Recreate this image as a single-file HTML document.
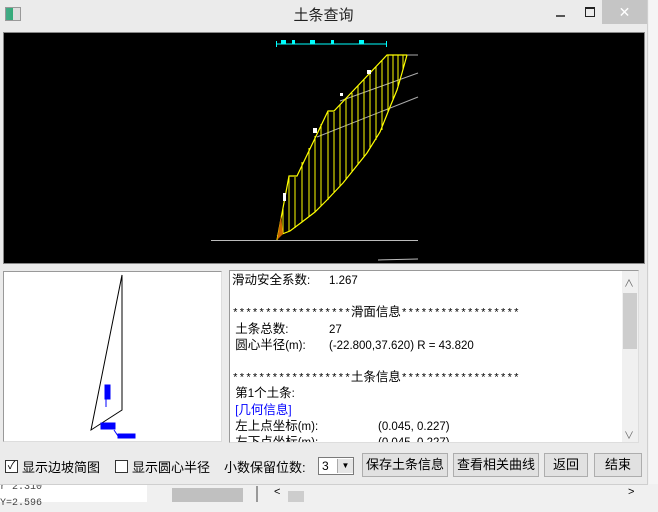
<!DOCTYPE html>
<html><head><meta charset="utf-8"><style>
body{margin:0;width:658px;height:502px;overflow:hidden;background:#f0f0f0;font-family:"Liberation Sans","Noto Sans CJK SC",sans-serif;position:relative}
.a{position:absolute}
.btn{position:absolute;top:453px;border:1px solid #adadad;background:#e1e1e1;font-size:13px;line-height:22px;text-align:center;box-sizing:border-box;height:24px}
.txt{font-family:"Liberation Sans","Noto Sans CJK SC",sans-serif;font-size:11.5px;color:#000}
.txt div{height:16.2px;line-height:16px;white-space:pre;overflow:visible}
.txt b{font-weight:normal;font-size:12.5px;line-height:1;font-family:"Noto Sans CJK SC",sans-serif}
.txt i{font-style:normal;font-size:11px;line-height:1;font-family:"Liberation Mono",monospace}
</style></head><body>
<div class="a" style="left:0;top:484px;width:147px;height:18px;background:#fff"></div>
<div class="a" style="left:0;top:480px;font-size:10px;color:#444;font-family:'Liberation Mono',monospace;line-height:16px;white-space:pre">r 2.310
Y=2.596</div>
<div class="a" style="left:172px;top:488px;width:71px;height:14px;background:#c0c0c0"></div>
<div class="a" style="left:256px;top:486px;width:2px;height:16px;background:#999"></div>
<div class="a" style="left:259px;top:486px;width:399px;height:16px;background:#f0f0f0"></div>
<div class="a" style="left:288px;top:491px;width:16px;height:11px;background:#cdcdcd"></div>
<div class="a" style="left:274px;top:486px;font-size:11px">&lt;</div>
<div class="a" style="left:628px;top:486px;font-size:11px">&gt;</div>
<div class="a" style="left:0;top:0;width:647px;height:484px;background:#ebebeb;border-right:1px solid #cfcfcf;border-bottom:1px solid #cfcfcf"></div>
<div class="a" style="left:649px;top:0;width:9px;height:484px;background:#f5f5f5"></div>
<div class="a" style="left:5px;top:7px;width:14px;height:12px;background:linear-gradient(90deg,#4a8 0,#3a7 50%,#ddd 50%);border:1px solid #999"></div>
<div class="a" style="left:0;top:4px;width:647px;text-align:center;font-size:15px;color:#222">土条查询</div>
<div class="a" style="left:556px;top:15px;width:9px;height:2px;background:#555"></div>
<div class="a" style="left:585px;top:7px;width:8px;height:7px;border:1px solid #222;border-top-width:2px"></div>
<div class="a" style="left:602px;top:0;width:45px;height:24px;background:#c5c5c5;color:#fff;text-align:center;font-size:14px;line-height:24px">✕</div>
<div class="a" style="left:3px;top:32px;width:642px;height:232px;background:#000;border:1px solid #888;box-sizing:border-box"></div>
<svg class="a" style="left:0;top:0" width="658" height="270">
<line x1="211" y1="240.5" x2="418" y2="240.5" stroke="#bbb"/>
<line x1="378" y1="260" x2="418" y2="259" stroke="#bbb"/>
<line x1="340" y1="101" x2="418" y2="73" stroke="#aaa"/>
<line x1="317" y1="137" x2="418" y2="97" stroke="#aaa"/>
<line x1="387" y1="55" x2="418" y2="55" stroke="#aaa"/>
<g stroke="#ff0" fill="none" stroke-width="1.2">
<polyline points="277,240 289,176 297,176 328,111 334,111 387,55 407,55"/>
<polyline points="277,236 290,231 302,222 315,212 327,200 343,183 355,168 367,153 380,132 390,107 397,90 402,73 407,55"/>
<g stroke-width="1">
<line x1="283" y1="208" x2="283" y2="234"/><line x1="289" y1="177" x2="289" y2="231"/><line x1="295" y1="177" x2="295" y2="228"/>
<line x1="302" y1="162" x2="302" y2="222"/><line x1="309" y1="148" x2="309" y2="217"/><line x1="315" y1="136" x2="315" y2="212"/>
<line x1="321" y1="124" x2="321" y2="206"/><line x1="328" y1="112" x2="328" y2="200"/><line x1="334" y1="112" x2="334" y2="193"/>
<line x1="340" y1="105" x2="340" y2="186"/><line x1="346" y1="99" x2="346" y2="180"/><line x1="352" y1="93" x2="352" y2="172"/>
<line x1="358" y1="86" x2="358" y2="164"/><line x1="364" y1="80" x2="364" y2="157"/><line x1="370" y1="73" x2="370" y2="148"/>
<line x1="376" y1="67" x2="376" y2="140"/><line x1="382" y1="60" x2="382" y2="130"/><line x1="388" y1="55" x2="388" y2="112"/>
<line x1="393" y1="55" x2="393" y2="100"/><line x1="398" y1="55" x2="398" y2="86"/><line x1="403" y1="55" x2="403" y2="70"/>
</g></g>
<polygon points="277,240 281,215 283,234" fill="#c60"/>
<line x1="276" y1="44" x2="386" y2="44" stroke="#0ff"/>
<g fill="#0ff"><rect x="281" y="40" width="5" height="4"/><rect x="292" y="40" width="3" height="4"/><rect x="310" y="40" width="5" height="4"/><rect x="331" y="40" width="3" height="4"/><rect x="359" y="40" width="5" height="4"/></g>
<g stroke="#0ff"><line x1="276.5" y1="41" x2="276.5" y2="47"/><line x1="386.5" y1="41" x2="386.5" y2="47"/></g>
<g fill="#fff"><rect x="283" y="193" width="3" height="8"/><rect x="313" y="128" width="4" height="5"/><rect x="367" y="70" width="4" height="4"/><rect x="340" y="93" width="3" height="3"/></g>
</svg>
<div class="a" style="left:3px;top:271px;width:219px;height:171px;background:#fff;border:1px solid #999;border-right-color:#ddd;border-bottom-color:#ddd;box-sizing:border-box"></div>
<svg class="a" style="left:0;top:260px" width="230" height="190">
<polygon points="122,15 122,150 91,170" fill="none" stroke="#000" stroke-width="1"/>
<g stroke="#00f" fill="#00f"><line x1="106" y1="125" x2="106" y2="147"/><rect x="105" y="125" width="5" height="14"/><rect x="101" y="163" width="14" height="6"/><line x1="114" y1="170" x2="118" y2="176"/><rect x="118" y="174" width="17" height="4"/></g>
</svg>
<div class="a" style="left:229px;top:270px;width:410px;height:173px;background:#fff;border:1px solid #999;border-right-color:#ddd;border-bottom-color:#ddd;box-sizing:border-box;overflow:hidden">
<div class="a txt" style="left:2px;top:2px">
<div><b>滑动安全系数</b>:<span style="position:absolute;left:97px">1.267</span></div>
<div></div>
<div><i>******************</i><b>滑面信息</b><i>******************</i></div>
<div> <b>土条总数</b>:<span style="position:absolute;left:97px">27</span></div>
<div> <b>圆心半径</b>(m):<span style="position:absolute;left:97px">(-22.800,37.620) R = 43.820</span></div>
<div></div>
<div><i>******************</i><b>土条信息</b><i>******************</i></div>
<div> <b>第</b>1<b>个土条</b>:</div>
<div style="color:#00f"> [<b>几何信息</b>]</div>
<div> <b>左上点坐标</b>(m):<span style="position:absolute;left:146px">(0.045, 0.227)</span></div>
<div> <b>左下点坐标</b>(m):<span style="position:absolute;left:146px">(0.045, 0.227)</span></div>
</div>
<div class="a" style="right:0;top:0;width:16px;height:171px;background:#f0f0f0"></div>
<div class="a" style="right:1px;top:22px;width:14px;height:56px;background:#cdcdcd"></div>
<div class="a" style="right:4px;top:4px;font-size:10px;color:#666">∧</div>
<div class="a" style="right:4px;top:156px;font-size:10px;color:#666">∨</div>
</div>
<div class="a" style="left:5px;top:460px;width:11px;height:11px;border:1px solid #333;background:#fff;font-size:11px;line-height:11px;text-align:center">✓</div>
<div class="a" style="left:22px;top:457px;font-size:13px">显示边坡简图</div>
<div class="a" style="left:115px;top:460px;width:11px;height:11px;border:1px solid #333;background:#fff"></div>
<div class="a" style="left:132px;top:457px;font-size:13px">显示圆心半径</div>
<div class="a" style="left:224px;top:457px;font-size:13px">小数保留位数:</div>
<div class="a" style="left:318px;top:457px;width:36px;height:18px;border:1px solid #7a7a7a;background:#fff;box-sizing:border-box;font-size:12px;line-height:16px;padding-left:3px">3</div>
<div class="a" style="left:337px;top:459px;width:15px;height:14px;background:#e6e6e6;border-left:1px solid #aaa;font-size:8px;text-align:center;line-height:14px">▼</div>
<div class="btn" style="left:362px;width:86px">保存土条信息</div>
<div class="btn" style="left:453px;width:86px">查看相关曲线</div>
<div class="btn" style="left:544px;width:44px">返回</div>
<div class="btn" style="left:594px;width:48px">结束</div>
</body></html>
